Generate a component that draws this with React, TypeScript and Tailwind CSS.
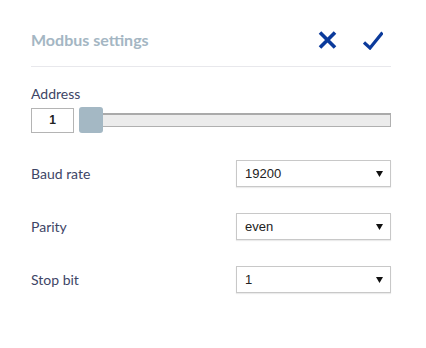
import React from "react";

function Select({ value }: { value: string }) {
  return (
    <div className="w-[155px] h-[27px] border border-[#c8c8c8] shadow-[0_1px_1px_rgba(0,0,0,0.08)] bg-white flex items-center justify-between pl-[8px] pr-[7px]">
      <span className="text-[13px] text-[#222] font-['Liberation_Sans',sans-serif]">{value}</span>
      <svg width="7" height="7" viewBox="0 0 7 7"><path d="M0 1h7L3.5 7z" fill="#111" /></svg>
    </div>
  );
}

export default function App() {
  return (
    <div className="w-[426px] h-[348px] bg-white font-['Lato',sans-serif] pl-[31px] pr-[35px] pt-[23px]">
      <div className="flex items-center justify-between h-[34px] pr-[8px]">
        <span className="text-[16px] font-bold text-[#a4b6c3]">Modbus settings</span>
        <div className="flex items-center gap-[26px]">
          <svg width="19" height="18" viewBox="0 0 19 18"><path d="M2 1.5L17 16.5M17 1.5L2 16.5" stroke="#0b3a9b" strokeWidth="3.6" /></svg>
          <svg width="20" height="19" viewBox="0 0 20 19"><path d="M1 11.5L7 17L19.5 1.5" stroke="#0b3a9b" strokeWidth="3.2" fill="none" /></svg>
        </div>
      </div>
      <div className="h-[1px] bg-[#e8e8ec] mt-[9px]" />
      <div className="mt-[16px] text-[14px] text-[#3d4566]">Address</div>
      <div className="flex items-center mt-[3px]">
        <div className="w-[43px] h-[25px] border border-[#b4b4b4] flex items-center justify-center text-[12px] font-bold text-[#222] font-['Liberation_Sans',sans-serif]">1</div>
        <div className="relative flex-1 ml-[5px] h-[26px] flex items-center">
          <div className="w-full h-[14px] bg-[#ececec] border border-[#b0b0b0] border-t-2 border-t-[#aaaaaa]" />
          <div className="absolute left-0 top-0 w-[24px] h-[26px] rounded-[3px] bg-[#a4b8c4]" />
        </div>
      </div>
      <div className="mt-[27px] flex flex-col gap-[26px]">
        {[["Baud rate", "19200"], ["Parity", "even"], ["Stop bit", "1"]].map(([l, v]) => (
          <div key={l} className="flex items-center justify-between">
            <span className="text-[14px] text-[#3d4566]">{l}</span>
            <Select value={v} />
          </div>
        ))}
      </div>
    </div>
  );
}
